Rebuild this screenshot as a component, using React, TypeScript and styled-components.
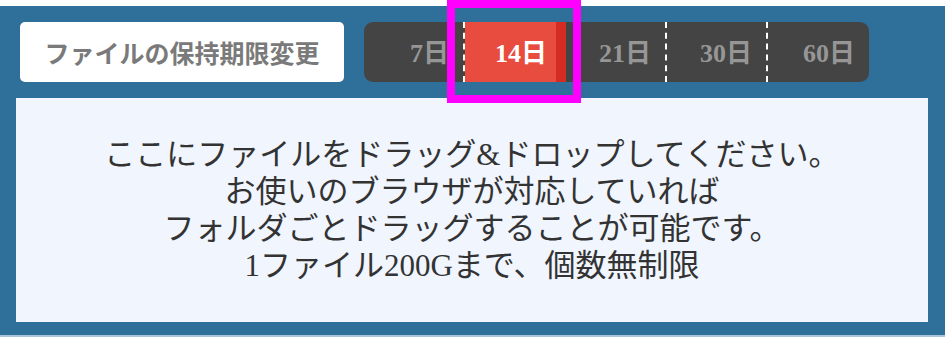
import { createGlobalStyle, styled } from "styled-components";

const GlobalStyle = createGlobalStyle`
    html, body {
        margin:0;
        padding:0;
        background:#ffffff;
    }
    * {
        box-sizing:border-box;
    }
`;

const Uploader = styled.section`
    margin-top:6px;
    background-color:#2e7099;
    padding:16px 17px 13px 16px;
    border-bottom:2px solid #a9c5da;
    font-family: "Liberation Serif", "Noto Sans CJK JP", serif;
`;

const Header = styled.div`
    display:flex;
    align-items:center;
    gap:20px;
    padding-left:4px;
    height:60px;
`;

const RetentionButton = styled.button`
    width:324px;
    height:60px;
    border:none;
    border-radius:5px;
    background-color:#ffffff;
    color:#7a7a7a;
    font-family:inherit;
    font-size:25px;
    font-weight:bold;
    cursor:pointer;
`;

const TabBar = styled.div`
    display:flex;
    height:60px;
    border-radius:9px;
    background-color:#444444;
`;

const Tab = styled.div<{ $active?: boolean; $last?: boolean }>`
    position:relative;
    width:101px;
    height:60px;
    display:flex;
    align-items:center;
    justify-content:flex-end;
    padding-right:${(p) => (p.$active ? "9px" : "14px")};
    padding-bottom:4px;
    font-size:26px;
    font-weight:bold;
    color:${(p) => (p.$active ? "#ffffff" : "#969696")};
    background-color:${(p) => (p.$active ? "#e74c3f" : "transparent")};
    border-right:${(p) =>
        p.$active ? "10px solid #d42b22" : p.$last ? "none" : "2px dashed #ffffff"};
    cursor:pointer;
`;

const Highlight = styled.span`
    position:absolute;
    left:-18px;
    top:-22px;
    width:134px;
    height:103px;
    border:8px solid #ff00ff;
    pointer-events:none;
`;

const DropZone = styled.div`
    margin-top:16px;
    height:224px;
    background-color:#f0f5fe;
    display:flex;
    flex-direction:column;
    align-items:center;
    justify-content:center;
    color:#333333;
    font-size:31px;
    line-height:37px;
    text-align:center;
`;

const Line = styled.div`
    white-space:nowrap;
`;

const periods = ["7日", "14日", "21日", "30日", "60日"];

export default function App(){
    const active = 1;
    return (
        <>
            <GlobalStyle />
            <Uploader>
                <Header>
                    <RetentionButton type="button">ファイルの保持期限変更</RetentionButton>
                    <TabBar>
                        {periods.map((label, i) => (
                            <Tab key={label} $active={i === active} $last={i === periods.length - 1}>
                                {label}
                                {i === active && <Highlight />}
                            </Tab>
                        ))}
                    </TabBar>
                </Header>
                <DropZone>
                    <Line>ここにファイルをドラッグ&ドロップしてください。</Line>
                    <Line>お使いのブラウザが対応していれば</Line>
                    <Line>フォルダごとドラッグすることが可能です。</Line>
                    <Line>1ファイル200Gまで、個数無制限</Line>
                </DropZone>
            </Uploader>
        </>
    )
}
